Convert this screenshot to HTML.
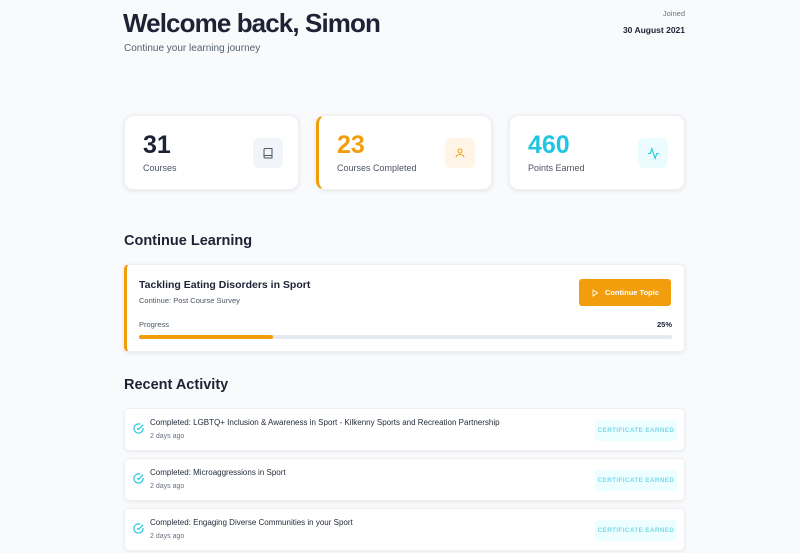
<!DOCTYPE html>
<html><head><style>
*{margin:0;padding:0;box-sizing:border-box}
body{width:800px;height:553px;overflow:hidden;background:#f8fafc;font-family:"Liberation Sans",sans-serif;color:#1e2235;position:relative}
.a{position:absolute}
.card{position:absolute;background:#fff;border-radius:9px;box-shadow:0 1px 5px rgba(0,0,0,.09);border:1px solid #eef0f4}
.num{position:absolute;left:18px;top:15px;font-size:25px;font-weight:bold}
.lbl{position:absolute;left:18px;top:47px;font-size:9px;color:#4b5563}
.ic{position:absolute;left:128px;top:22px;width:30px;height:30px;border-radius:6px;display:flex;align-items:center;justify-content:center}
.item{position:absolute;left:124px;width:561px;height:43px;background:#fff;border-radius:5px;box-shadow:0 1px 3px rgba(0,0,0,.07);border:1px solid #eef0f4}
.item .t{position:absolute;left:25px;top:9px;font-size:8px;color:#1f2937}
.item .s{position:absolute;left:25px;top:24px;font-size:7px;color:#6b7280}
.item svg{position:absolute;left:8px;top:14px}
.badge{position:absolute;left:470px;top:11px;width:82px;height:21px;background:#ecfeff;color:#7ad9e8;font-size:6.3px;font-weight:bold;letter-spacing:.4px;display:flex;align-items:center;justify-content:center;border-radius:3px}
</style></head><body>
<div class="a" style="left:123px;top:8px;font-size:26px;font-weight:bold;letter-spacing:-0.9px">Welcome back, Simon</div>
<div class="a" style="left:124px;top:43px;font-size:10px;color:#56606e">Continue your learning journey</div>
<div class="a" style="right:115px;top:9px;font-size:7.5px;color:#6b7280">Joined</div>
<div class="a" style="right:115px;top:25px;font-size:8.5px;font-weight:bold">30 August 2021</div>

<div class="card" style="left:124px;top:115px;width:175px;height:75px">
<div class="num">31</div><div class="lbl">Courses</div>
<div class="ic" style="background:#f1f4f9"><svg width="12" height="12" viewBox="0 0 24 24" fill="none" stroke="#4b5563" stroke-width="2"><path d="M4 19.5A2.5 2.5 0 0 1 6.5 17H20V3H6.5A2.5 2.5 0 0 0 4 5.5v14zM4 19.5A2.5 2.5 0 0 0 6.5 22H20v-5"/></svg></div></div>
<div class="card" style="left:316px;top:115px;width:176px;height:75px;border-left:3px solid #f29e0c">
<div class="num" style="color:#f29e0c;left:18px">23</div><div class="lbl">Courses Completed</div>
<div class="ic" style="background:#fff4e6;left:126px"><svg width="12" height="12" viewBox="0 0 24 24" fill="none" stroke="#f29e0c" stroke-width="2"><circle cx="12" cy="8" r="4"/><path d="M4 21c0-4 4-6 8-6s8 2 8 6"/></svg></div></div>
<div class="card" style="left:509px;top:115px;width:176px;height:75px">
<div class="num" style="color:#22c5e0">460</div><div class="lbl">Points Earned</div>
<div class="ic" style="background:#ecfbfd"><svg width="13" height="13" viewBox="0 0 24 24" fill="none" stroke="#22c5e0" stroke-width="2"><path d="M22 12h-4l-3 9L9 3l-3 9H2"/></svg></div></div>

<div class="a" style="left:124px;top:233px;font-size:14.5px;font-weight:bold">Continue Learning</div>
<div class="card" style="left:124px;top:264px;width:561px;height:88px;border-left:3px solid #f29e0c;border-radius:5px">
<div class="a" style="left:12px;top:14px;font-size:10.5px;font-weight:bold">Tackling Eating Disorders in Sport</div>
<div class="a" style="left:12px;top:31px;font-size:7.5px;color:#4b5563">Continue: Post Course Survey</div>
<div class="a" style="left:452px;top:14px;width:92px;height:27px;background:#f29e0c;border-radius:3px;color:#fff;font-size:7.5px;font-weight:bold;display:flex;align-items:center;justify-content:center;gap:6px"><svg width="8" height="8" viewBox="0 0 24 24" fill="none" stroke="#fff" stroke-width="2.5"><path d="M6 3l14 9-14 9z"/></svg>Continue Topic</div>
<div class="a" style="left:12px;top:55px;font-size:7.5px;color:#4b5563">Progress</div>
<div class="a" style="right:12px;top:55px;font-size:7.5px;font-weight:bold">25%</div>
<div class="a" style="left:12px;top:70px;width:533px;height:4px;background:#e5e9f0;border-radius:2px"><div style="width:134px;height:4px;background:#f29e0c;border-radius:2px"></div></div>
</div>

<div class="a" style="left:124px;top:377px;font-size:14.5px;font-weight:bold">Recent Activity</div>
<div class="item" style="top:408px"><svg width="11" height="11" viewBox="0 0 24 24" fill="none" stroke="#22c5e0" stroke-width="2.5"><path d="M22 11v1a10 10 0 1 1-6-9.2"/><path d="M22 4L12 14l-3-3"/></svg><div class="t">Completed: LGBTQ+ Inclusion &amp; Awareness in Sport - Kilkenny Sports and Recreation Partnership</div><div class="s">2 days ago</div><div class="badge">CERTIFICATE EARNED</div></div>
<div class="item" style="top:458px"><svg width="11" height="11" viewBox="0 0 24 24" fill="none" stroke="#22c5e0" stroke-width="2.5"><path d="M22 11v1a10 10 0 1 1-6-9.2"/><path d="M22 4L12 14l-3-3"/></svg><div class="t">Completed: Microaggressions in Sport</div><div class="s">2 days ago</div><div class="badge">CERTIFICATE EARNED</div></div>
<div class="item" style="top:508px"><svg width="11" height="11" viewBox="0 0 24 24" fill="none" stroke="#22c5e0" stroke-width="2.5"><path d="M22 11v1a10 10 0 1 1-6-9.2"/><path d="M22 4L12 14l-3-3"/></svg><div class="t">Completed: Engaging Diverse Communities in your Sport</div><div class="s">2 days ago</div><div class="badge">CERTIFICATE EARNED</div></div>
</body></html>
